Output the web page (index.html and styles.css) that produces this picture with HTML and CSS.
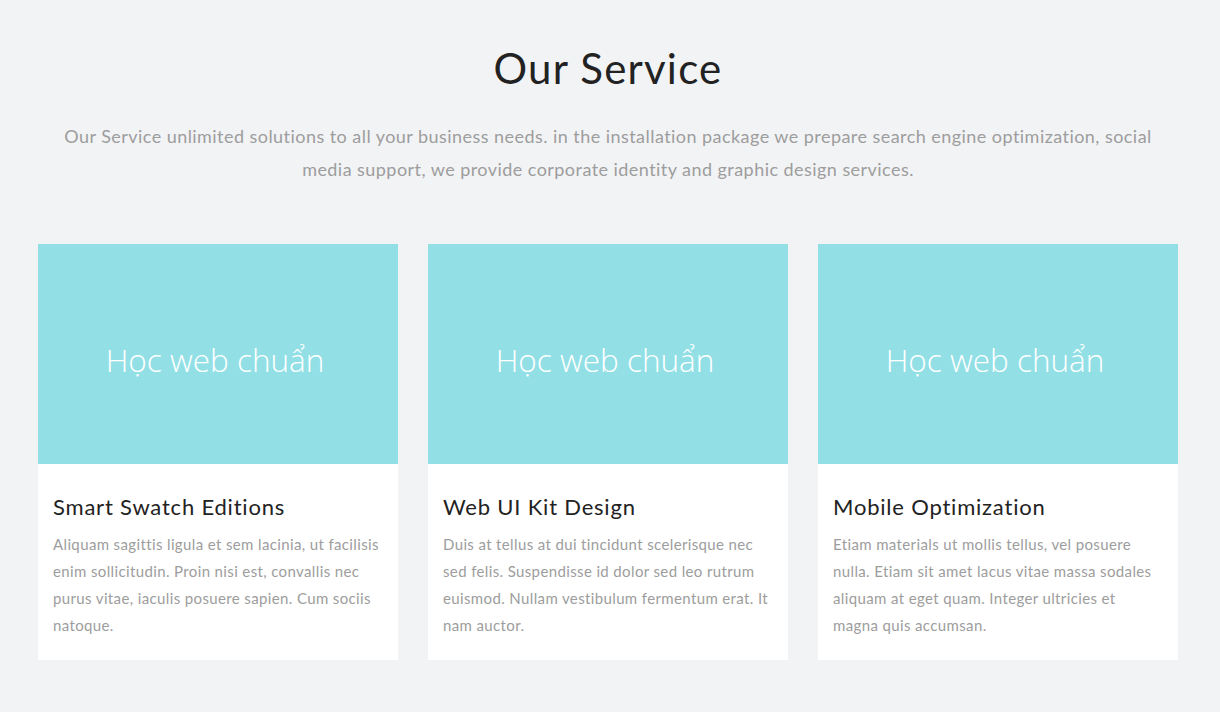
FILE: index.html
```html
<!DOCTYPE html>
<html lang="en">
<head>
<meta charset="utf-8">
<title>Our Service</title>
<link rel="stylesheet" href="styles.css">
</head>
<body>
<section class="service">
  <h1 class="service-title">Our Service</h1>
  <p class="service-lead">Our Service unlimited solutions to all your business needs. in the installation package we prepare search engine optimization, social media support, we provide corporate identity and graphic design services.</p>
  <div class="cards">
    <article class="card">
      <div class="card-media"><span>Học web chuẩn</span></div>
      <div class="card-body">
        <h2 class="card-title">Smart Swatch Editions</h2>
        <p class="card-text">Aliquam sagittis ligula et sem lacinia, ut facilisis enim sollicitudin. Proin nisi est, convallis nec purus vitae, iaculis posuere sapien. Cum sociis natoque.</p>
      </div>
    </article>
    <article class="card">
      <div class="card-media"><span>Học web chuẩn</span></div>
      <div class="card-body">
        <h2 class="card-title">Web UI Kit Design</h2>
        <p class="card-text">Duis at tellus at dui tincidunt scelerisque nec sed felis. Suspendisse id dolor sed leo rutrum euismod. Nullam vestibulum fermentum erat. It nam auctor.</p>
      </div>
    </article>
    <article class="card">
      <div class="card-media"><span>Học web chuẩn</span></div>
      <div class="card-body">
        <h2 class="card-title">Mobile Optimization</h2>
        <p class="card-text">Etiam materials ut mollis tellus, vel posuere nulla. Etiam sit amet lacus vitae massa sodales aliquam at eget quam. Integer ultricies et magna quis accumsan.</p>
      </div>
    </article>
  </div>
</section>
</body>
</html>
```

FILE: styles.css
```css
* { box-sizing: border-box; }
html, body { margin: 0; padding: 0; }
body {
  background: #f2f3f5;
  font-family: "Lato", "Noto Sans", sans-serif;
  width: 1220px;
  height: 712px;
  overflow: hidden;
}
.service {
  width: 1140px;
  margin: 0 0 0 38px;
  padding-top: 42px;
  display: flex;
  flex-direction: column;
  align-items: center;
}
.service-title {
  margin: 0;
  font-size: 42px;
  line-height: 52px;
  font-weight: 400;
  color: #222;
  letter-spacing: 1.2px;
}
.service-lead {
  margin: 26px 0 0;
  max-width: 1110px;
  text-align: center;
  font-size: 18px;
  line-height: 33px;
  color: #9d9d9d;
  font-weight: 400;
  letter-spacing: 0.45px;
}
.cards {
  margin-top: 58px;
  width: 100%;
  display: grid;
  grid-template-columns: repeat(3, 360px);
  column-gap: 30px;
}
.card {
  background: #fff;
  height: 416px;
}
.card-media {
  height: 220px;
  background: #92e0e6;
  display: flex;
  align-items: center;
  justify-content: center;
  padding: 10px 6px 0 0;
}
.card-media span {
  font-family: "Open Sans", sans-serif;
  font-weight: 300;
  color: #fff;
  font-size: 31.5px;
}
.card-body {
  padding: 28px 15px 20px;
}
.card-title {
  margin: 0;
  font-size: 22px;
  line-height: 30px;
  font-weight: 400;
  color: #222;
  letter-spacing: 0.8px;
}
.card-text {
  margin: 9px 0 0;
  font-size: 15px;
  line-height: 27px;
  color: #9d9d9d;
  letter-spacing: 0.37px;
}
```
